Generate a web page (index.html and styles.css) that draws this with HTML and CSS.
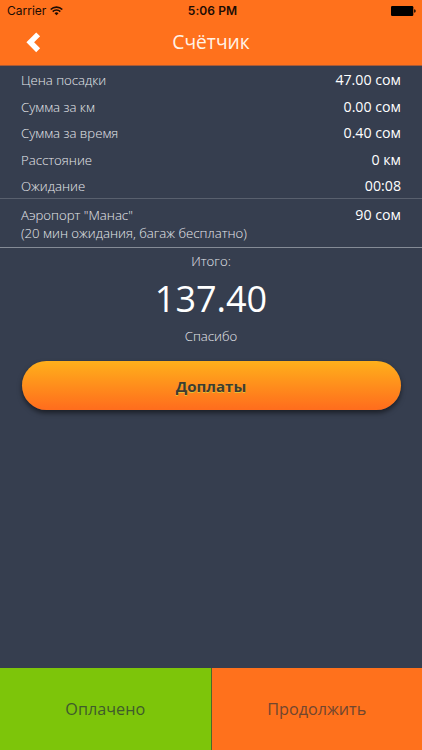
FILE: index.html
```html
<!DOCTYPE html>
<html lang="ru">
<head>
<meta charset="utf-8">
<title>Счётчик</title>
<link rel="stylesheet" href="styles.css">
</head>
<body>
<div class="app">
  <header class="header">
    <div class="status">
      <div class="carrier"><span>Carrier</span>
        <svg class="wifi" width="13" height="10" viewBox="0 0 13 10" fill="none" stroke="#1c0c04" stroke-width="1.6"><path d="M.7 3.5a8.2 8.2 0 0 1 11.6 0M2.7 5.6a5.4 5.4 0 0 1 7.6 0"/><path d="M6.5 9.3 4.5 7.2a2.9 2.9 0 0 1 4 0z" fill="#1c0c04" stroke="none"/></svg>
      </div>
      <div class="clock">5:06 PM</div>
      <svg class="battery" width="25" height="10" viewBox="0 0 25 10"><rect width="22.3" height="10" rx="1.2"/><path d="M23.2 3.2q1.5.3 1.5 1.8t-1.5 1.8z"/></svg>
    </div>
    <div class="nav">
      <svg class="back" width="15" height="21" viewBox="0 0 15 21"><path d="M10.2 .6 14.1 4.3 8.1 10.3 14.1 16.3 10.2 20.2 .4 10.3z" fill="#fff"/></svg>
      <h1 class="title">Счётчик</h1>
    </div>
  </header>
  <main class="content">
    <section class="rows">
      <div class="row"><span class="label">Цена посадки</span><span class="value">47.00 сом</span></div>
      <div class="row"><span class="label">Сумма за км</span><span class="value">0.00 сом</span></div>
      <div class="row"><span class="label">Сумма за время</span><span class="value">0.40 сом</span></div>
      <div class="row"><span class="label">Расстояние</span><span class="value">0 км</span></div>
      <div class="row"><span class="label">Ожидание</span><span class="value">00:08</span></div>
    </section>
    <section class="extra">
      <span class="label">Аэропорт "Манас"<br>(20 мин ожидания, багаж бесплатно)</span><span class="value">90 сом</span>
    </section>
    <section class="total">
      <div class="caption">Итого:</div>
      <div class="amount">137.40</div>
      <div class="caption">Спасибо</div>
    </section>
    <button class="surcharge">Доплаты</button>
  </main>
  <footer class="actions">
    <button class="action paid">Оплачено</button>
    <button class="action resume">Продолжить</button>
  </footer>
</div>
</body>
</html>
```
FILE: styles.css
```css
* { box-sizing: border-box; }
body { margin: 0; }
button { border: 0; padding: 0; margin: 0; font-family: inherit; }
.app {
  width: 422px; height: 750px; display: flex; flex-direction: column;
  background: #363e4f; color: #fff; overflow: hidden;
  font-family: "Open Sans", sans-serif; white-space: nowrap;
}
.header { height: 66px; background: #ff711c; border-bottom: 1px solid #a95a36; }
.status {
  height: 22px; padding: 0 6px 0 7px; display: grid;
  grid-template-columns: 1fr auto 1fr; align-items: center;
  color: #1c0c04; font: 12px/22px Inter, sans-serif;
}
.carrier { display: flex; align-items: center; gap: 4px; }
.clock { font-weight: 600; letter-spacing: .1px; padding-left: 2px; }
.battery { justify-self: end; fill: #000; }
.nav {
  height: 40px; padding: 0 26px; display: grid;
  grid-template-columns: 1fr auto 1fr; align-items: center;
}
.title { margin: 0; font-size: 19.2px; line-height: 40px; font-weight: 400; color: #fff3e8; }
.content { flex: 1; }
.rows { padding: 1px 21px 0; height: 133px; border-bottom: 1px solid #59606e; }
.row { display: flex; justify-content: space-between; height: 26.5px; line-height: 26.5px; }
.label { font-size: 13.2px; font-weight: 300; color: #e6e8ec; }
.value { font-size: 14.2px; color: #fff; }
.extra {
  height: 49px; padding: 7px 21px 0; border-bottom: 1px solid #858b96;
  display: flex; justify-content: space-between; line-height: 18px;
}
.total { text-align: center; padding-top: 4px; }
.caption { font-size: 13.2px; line-height: 18px; font-weight: 300; color: #e6e8ec; }
.amount { font-size: 36px; line-height: 57px; }
.surcharge {
  display: block; width: 379px; height: 49px; margin: 16px auto 0;
  border-radius: 25px; background: linear-gradient(#ffb01b, #ff6c1d);
  box-shadow: 0 3px 5px rgba(0, 0, 0, .5);
  color: #3e3c32; font-size: 15px; font-weight: 700;
  text-shadow: 0 1px 0 #e4bd35;
}
.actions { height: 82px; display: flex; }
.action { flex: 1; font-size: 16.2px; font-weight: 400; }
.paid { background: #7dc50a; color: #3f5b2c; border-right: 1px solid #4c6829; }
.resume { background: #ff711c; color: #71462f; }
```
